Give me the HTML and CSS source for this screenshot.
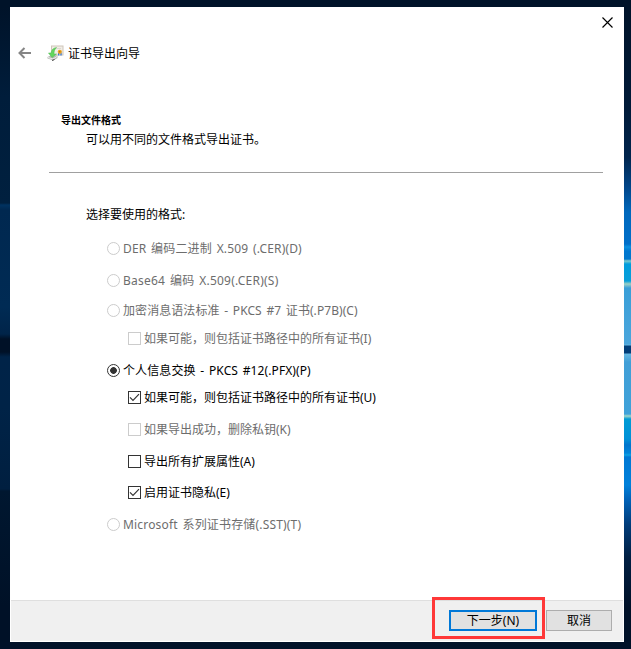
FILE: index.html
```html
<!DOCTYPE html>
<html lang="zh-CN">
<head>
<meta charset="utf-8">
<title>证书导出向导</title>
<link rel="stylesheet" href="styles.css">
</head>
<body>
<div class="wallpaper wallpaper-left"></div>
<div class="wallpaper wallpaper-right"></div>
<main class="dialog">
  <div class="caption">
    <svg class="close" width="11" height="11" viewBox="0 0 11 11"><path d="M.5.5l10 10M10.5.5l-10 10" stroke="#000" stroke-width="1.15"/></svg>
  </div>
  <header class="title-bar">
    <svg class="back" width="14" height="12" viewBox="0 0 14 12"><path d="M1.5 6H13M6.5 1L1.5 6l5 5" fill="none" stroke="#858585" stroke-width="2"/></svg>
    <svg class="cert" width="17" height="17" viewBox="0 0 17 17">
      <rect x="4.500" y="1" width="11.500" height="9" fill="#f1ede6" stroke="#cfc6ba"/>
      <path d="M7 3.500h7" stroke="#ddd8ce"/>
      <path d="M.5 12l4-2 6 .5v2.500l-4 2.500-6-2z" fill="#b5b8b4"/>
      <path d="M1 12.500l5 1.500 4-2.500" fill="none" stroke="#eeeeec"/>
      <path d="M5 15.500l2.500-1" stroke="#444"/>
      <path d="M9.500 2.500C6 3 4.500 5 4 8H1.500l3.500 4.500L9.500 9H7C7 6 7.500 4.500 9.500 2.500z" fill="#62d65e" stroke="#4dba50" stroke-width=".5"/>
      <path d="M11.700 7.500v3M14 7.500v3" stroke="#3475d0" stroke-width="1.300"/>
      <circle cx="12.800" cy="6.800" r="2.100" fill="#eda521"/><circle cx="12.800" cy="6.800" r=".7" fill="#a86a10"/>
    </svg>
    <h1>证书导出向导</h1>
  </header>
  <section class="intro">
    <h2>导出文件格式</h2>
    <p>可以用不同的文件格式导出证书。</p>
  </section>
  <hr>
  <section class="formats">
    <p class="prompt">选择要使用的格式:</p>
    <div class="option disabled"><i class="radio"></i><span class="der">DER 编码二进制 X.509 (.CER)(D)</span></div>
    <div class="option disabled g12"><i class="radio"></i><span class="base">Base64 编码 X.509(.CER)(S)</span></div>
    <div class="option disabled g10"><i class="radio"></i><span class="p7">加密消息语法标准 - PKCS #7 证书(.P7B)(C)</span></div>
    <div class="option sub disabled g8"><i class="box"></i><span>如果可能，则包括证书路径中的所有证书(I)</span></div>
    <div class="option g12"><i class="radio on"></i><span class="p12">个人信息交换 - PKCS #12(.PFX)(P)</span></div>
    <div class="option sub g7"><i class="box"><svg width="11" height="11" viewBox="0 0 11 11"><path d="M1 5.300l3 3L10 2.200" fill="none" stroke="#333" stroke-width="1.200"/></svg></i><span>如果可能，则包括证书路径中的所有证书(U)</span></div>
    <div class="option sub disabled g12"><i class="box"></i><span>如果导出成功，删除私钥(K)</span></div>
    <div class="option sub g12"><i class="box"></i><span>导出所有扩展属性(A)</span></div>
    <div class="option sub g11"><i class="box"><svg width="11" height="11" viewBox="0 0 11 11"><path d="M1 5.300l3 3L10 2.200" fill="none" stroke="#333" stroke-width="1.200"/></svg></i><span>启用证书隐私(E)</span></div>
    <div class="option disabled g12"><i class="radio"></i><span class="sst">Microsoft 系列证书存储(.SST)(T)</span></div>
  </section>
  <footer>
    <div class="highlight"><button class="next">下一步(N)</button></div>
    <button class="cancel">取消</button>
  </footer>
</main>
</body>
</html>
```

FILE: styles.css
```css
* { box-sizing: border-box; }
body {
  margin: 0;
  width: 631px;
  height: 649px;
  padding: 7px 7px 7px 10px;
  overflow: hidden;
  position: relative;
  background: linear-gradient(#001329, #001128);
  font: 12px/20px "Noto Sans", "Noto Sans CJK SC", sans-serif;
  color: #000;
}
h1, h2, p { margin: 0; font-size: 12px; font-weight: 400; }

/* Desktop visible on both sides of the window */
.wallpaper { position: absolute; top: 7px; bottom: 7px; }
.wallpaper-left {
  left: 0;
  width: 10px;
  background: linear-gradient(#001329 0, #001d3b 90px, #00203f 196px, #003260 198px, #002850 203px, #002b54 300px, #002449 327px, #001127 332px, #001127 345px, #002348 350px, #002347 400px, #001f40 482px, #001730 484px, #001127 600px);
}
.wallpaper-right {
  right: 0;
  width: 7px;
  background: linear-gradient(#001329 0, #001a38 100px, #00254d 150px, #004588 180px, #0068bc 205px, #006fc9 237px, #0b91e0 240px, #0077cf 244px, #0078cd 252px, #7bc9cb 254px, #009ddd 257px, #079fd9 274px, #9cd0c5 277px, #399fd8 281px, #4ba6dc 337px, #62b5e0 338px, #003d78 339px, #003d78 346px, #65b7e1 347px, #419fd7 355px, #3fa2d9 407px, #a0d6c9 409px, #009bd5 412px, #0091d7 432px, #0075cd 438px, #0085d9 446px, #0ca2e4 448px, #0078d4 450px, #0081da 478px, #0063b9 492px, #003c79 518px, #001f43 550px, #001128 600px);
}

.dialog {
  position: relative;
  display: flex;
  flex-direction: column;
  width: 614px;
  height: 635px;
  background: #fff;
}
.caption { display: flex; justify-content: flex-end; padding: 10px 11px 0 0; height: 36px; }
.title-bar { display: flex; align-items: center; height: 20px; padding-left: 8px; }
.title-bar h1 { padding-top: 2px; }
.cert { margin: 0 4px 0 15px; }
.intro { padding: 47px 0 0 51px; height: 109px; }
.intro h2 { font-size: 10px; font-weight: 700; }
.intro p { padding-left: 25px; }
hr { width: 554px; height: 1px; margin: 0 0 0 39px; border: 0; background: #a0a0a0; }

.formats { padding: 32px 0 0 76px; }
.prompt { height: 33px; }
.option { display: flex; align-items: center; height: 20px; padding-left: 21px; white-space: nowrap; }
.option span { padding-top: 2px; }
.der { word-spacing: 1.5px; letter-spacing: .15px; }
.base { word-spacing: 1.5px; letter-spacing: .22px; }
.p7 { word-spacing: 1.5px; letter-spacing: .065px; }
.p12 { word-spacing: 1.5px; letter-spacing: .1px; }
.sst { word-spacing: 1.5px; letter-spacing: .17px; }
.sub { padding-left: 42px; }
.g7 { margin-top: 7px; }
.g8 { margin-top: 8px; }
.g10 { margin-top: 10px; }
.g11 { margin-top: 11px; }
.g12 { margin-top: 12px; }
.radio, .box { display: flex; flex: none; width: 13px; height: 13px; margin-right: 3px; border: 1px solid #333; }
.radio { border-radius: 50%; }
.radio.on { background: radial-gradient(circle, #333 3px, transparent 3.7px); }
.disabled { color: #6d6d6d; }
.disabled .radio, .disabled .box { border-color: #ccc; }

footer {
  display: flex;
  height: 41px;
  margin: auto 1px 1px;
  border-top: 1px solid #dfdfdf;
  background: #f0f0f0;
  justify-content: flex-end;
  align-items: flex-start;
  padding-right: 11px;
}
.highlight {
  flex: none;
  width: 113px;
  height: 42px;
  margin: -4px 1px 0 0;
  padding: 10px 0 0 14px;
  border: 3px solid #ff3838;
}
button { display: block; padding: 0; background: #e1e1e1; font: inherit; color: #000; }
.next { width: 88px; height: 21px; border: 2px solid #0078d7; line-height: 16px; }
.cancel { width: 66px; height: 21px; margin-top: 9px; border: 1px solid #adadad; line-height: 18px; }
```
